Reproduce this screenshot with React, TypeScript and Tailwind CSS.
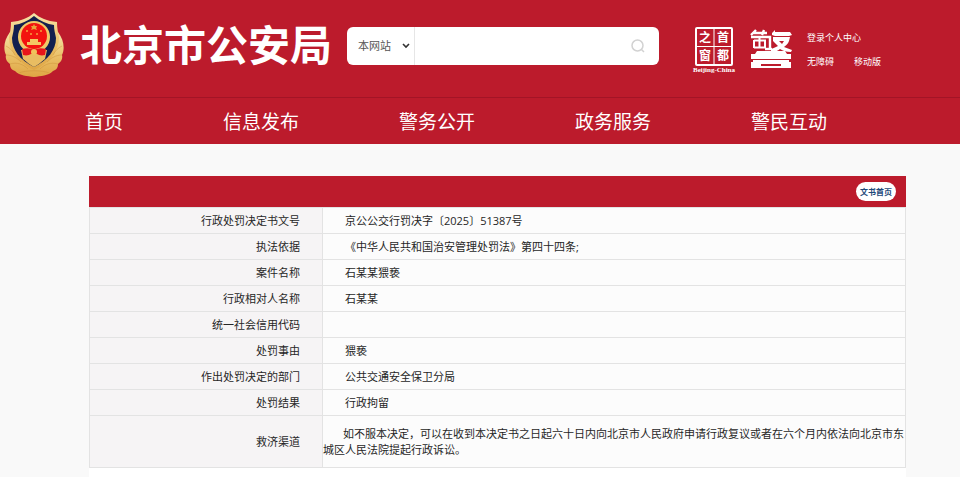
import React from "react";

const navItems = ["首页", "信息发布", "警务公开", "政务服务", "警民互动"];

const rows: [string, string][] = [
  ["行政处罚决定书文号", "京公公交行罚决字〔2025〕51387号"],
  ["执法依据", "《中华人民共和国治安管理处罚法》第四十四条;"],
  ["案件名称", "石某某猥亵"],
  ["行政相对人名称", "石某某"],
  ["统一社会信用代码", ""],
  ["处罚事由", "猥亵"],
  ["作出处罚决定的部门", "公共交通安全保卫分局"],
  ["处罚结果", "行政拘留"],
];

function PoliceBadge() {
  return (
    <svg viewBox="0 0 60 64" className="h-16 w-[60px] shrink-0" role="img" aria-label="警徽">
      <defs>
        <linearGradient id="gold" x1="0" y1="0" x2="0" y2="1">
          <stop offset="0" stopColor="#f6e3a8" />
          <stop offset="0.6" stopColor="#e9bd62" />
          <stop offset="1" stopColor="#dfa544" />
        </linearGradient>
      </defs>
      <path
        d="M6 19C0 27-1 36 2 42c-1 4 1 7 4 9 0 4 2 6 5 7 5 5 12 5 19 6 7-1 14-1 19-6 3-1 5-3 5-7 3-2 5-5 4-9 3-6 2-15-4-23z"
        fill="url(#gold)"
      />
      <path
        d="M30 0c6 5 13 8 23 9 0 6 1 10 2 15 0 14-9 26-25 33C14 50 5 38 5 24c1-5 2-9 2-15C17 8 24 5 30 0z"
        fill="url(#gold)"
      />
      <path
        d="M30 3c6 5 13 8 20 9 0 5 1 8 2 13 0 12-8 22-22 29C16 47 8 37 8 25c1-5 2-8 2-13 7-1 14-4 20-9z"
        fill="#12204f"
      />
      <path d="M17 37h26l-2 9c-4 3-7 6-11 8-4-2-7-5-11-8z" fill="#e9bd62" />
      <circle cx="30" cy="24" r="16" fill="#f0c968" />
      <circle cx="30" cy="23" r="13" fill="#f3130f" />
      <path d="M30 11l1 2h2l-1 2 1 2-3-1-3 1 1-2-1-2h2z" fill="#e9a33a" />
      <g fill="#f5a23f">
        <circle cx="23" cy="18" r="1" />
        <circle cx="37" cy="18" r="1" />
        <circle cx="27" cy="21" r="1" />
        <circle cx="33" cy="21" r="1" />
      </g>
      <path d="M26 26h8v3h3v3H23v-3h3z" fill="#f4c762" />
      <path d="M18 36c4-1 7-1 9 0h6c2-1 5-1 9 0l-1 6c-4 1-6 0-8-1h-6c-2 1-4 2-8 1z" fill="#e8151a" />
      <circle cx="30" cy="39" r="3" fill="#f0c25c" />
      <g fill="none" stroke="#c98c34" strokeWidth="0.7" opacity="0.6">
        <path d="M2 33c4 2 7 5 9 9M2 42c6 0 11 3 15 7M6 51c7-2 13 0 18 5M58 33c-4 2-7 5-9 9M58 42c-6 0-11 3-15 7M54 51c-7-2-13 0-18 5M15 60c6-3 24-3 30 0" />
      </g>
    </svg>
  );
}

function CapitalWindowLogo() {
  return (
    <svg viewBox="0 0 44 46" className="h-[46px] w-11 overflow-visible" role="img" aria-label="首都之窗">
      <rect x="3" y="1" width="36" height="37" rx="1" fill="none" stroke="#fff" strokeWidth="2" />
      <path d="M21 2v35M4 19.500h34" stroke="#fff" strokeWidth="1" />
      <g fill="#fff" fontSize="12" fontWeight="700" textAnchor="middle" fontFamily="'Noto Sans CJK SC', sans-serif">
        <text x="12" y="15">之</text>
        <text x="30" y="15">首</text>
        <text x="12" y="33">窗</text>
        <text x="30" y="33">都</text>
      </g>
      <text x="21" y="45" fill="#fff" fontSize="7" fontWeight="700" textAnchor="middle" fontFamily="'Liberation Serif', serif">
        Beijing-China
      </text>
    </svg>
  );
}

function JingLogo() {
  return (
    <svg viewBox="0 0 44 40" className="h-10 w-11" role="img" aria-label="警">
      <g fill="none" stroke="#fff" strokeWidth="2.4">
        <path d="M7 1L2 6M4 4h14M15 1l-2 5M2 8h19v12" />
        <path d="M5 11v8M5 11.500h11v7H5M10.500 9v10" strokeWidth="2" />
        <path d="M16 20h7" />
      </g>
      <g fill="#fff">
        <path d="M23 4l3-3v2h15l2 3-3 1H26l-3-1zM24 8h17l-1 4c-1 3-3 4-5 6l8 3-1 2c-5 0-8-1-11-3-2 2-5 3-9 3v-3c3-1 5-2 7-3l-5-5z" />
        <path d="M8 22h28l2 3H6zM2 25h40v5H2zM4 31h36v3H4zM2 33h40v6H2z" />
      </g>
      <path d="M30 12h5l-2 3z" fill="#bc1b2c" />
      <path d="M12 35h20v2H12z" fill="#bc1b2c" />
    </svg>
  );
}

export default function App() {
  return (
    <div className="min-h-screen bg-[#f9f9f9] font-['Open_Sans','Noto_Sans_CJK_SC',sans-serif] text-[#262626]" lang="zh-CN">
      <header className="bg-[#bc1b2c] text-white">
        <div className="flex h-[97px] items-start pl-1">
          <div className="flex items-start gap-4 pt-[13px]">
            <PoliceBadge />
            <h1 className="text-[42px] leading-[64px] font-bold whitespace-nowrap">北京市公安局</h1>
          </div>
          <form className="mt-[27px] ml-[15px] flex h-[38px] w-[312px] overflow-hidden rounded-md bg-white text-[11px] text-[#555]">
            <div className="relative w-[68px] shrink-0 border-r border-[#e6e6e6]">
              <select aria-label="搜索范围" className="h-full w-full appearance-none bg-transparent pl-[11px] outline-none">
                <option>本网站</option>
              </select>
              <svg viewBox="0 0 8 6" className="pointer-events-none absolute top-4 right-1 h-1.5 w-2" aria-hidden="true">
                <path d="M1 1l3 3 3-3" fill="none" stroke="#333" strokeWidth="1.600" />
              </svg>
            </div>
            <input aria-label="搜索" className="min-w-0 flex-1 px-2 outline-none" />
            <button type="button" aria-label="搜索" className="flex w-[43px] items-center justify-center">
              <svg viewBox="0 0 14 14" className="h-3.5 w-3.5" fill="none" stroke="#d2d2d2" strokeWidth="1.500">
                <circle cx="6.500" cy="6.500" r="5.500" />
                <path d="M10.500 10.500L13 13" />
              </svg>
            </button>
          </form>
          <div className="mt-[27px] ml-[34px] flex shrink-0 items-start gap-3">
            <CapitalWindowLogo />
            <div className="pt-[2px]">
              <JingLogo />
            </div>
          </div>
          <div className="mt-7 ml-[14px] flex flex-col gap-1 text-[9px] leading-5 whitespace-nowrap">
            <a href="#login">登录个人中心</a>
            <div className="flex gap-5">
              <a href="#accessible">无障碍</a>
              <a href="#mobile">移动版</a>
            </div>
          </div>
        </div>
        <nav className="flex h-[47px] items-center gap-[100px] border-t border-[#a31426] pt-0.5 pl-[85px] text-[19px] whitespace-nowrap">
          {navItems.map((item) => (
            <a key={item} href="#nav">
              {item}
            </a>
          ))}
        </nav>
      </header>

      <main className="pt-8 pr-[54px] pl-[89px]">
        <div className="bg-white pb-[9px]">
          <div className="flex h-[31px] items-center justify-end bg-[#bc1b2c] pr-[10px]">
            <button type="button" className="h-[19px] rounded-full bg-white px-1 text-[8px] font-bold text-[#1f4a7a]">
              文书首页
            </button>
          </div>
          <table className="w-full table-fixed border-collapse bg-[#fcfcfc] text-[11px] leading-4">
            <colgroup>
              <col className="w-[233px]" />
              <col />
            </colgroup>
            <tbody>
              {rows.map(([label, value]) => (
                <tr key={label} className="h-[26px]">
                  <th scope="row" className="border border-[#e3e3e3] bg-[#f6f4f5] pr-[22px] text-right font-normal">
                    {label}
                  </th>
                  <td className="border border-[#e3e3e3] pl-[22px]">{value}</td>
                </tr>
              ))}
              <tr className="h-[52px]">
                <th scope="row" className="border border-[#e3e3e3] bg-[#f6f4f5] pr-[22px] text-right font-normal">
                  救济渠道
                </th>
                <td className="border border-[#e3e3e3] indent-5">
                  如不服本决定，可以在收到本决定书之日起六十日内向北京市人民政府申请行政复议或者在六个月内依法向北京市东城区人民法院提起行政诉讼。
                </td>
              </tr>
            </tbody>
          </table>
        </div>
      </main>
    </div>
  );
}
